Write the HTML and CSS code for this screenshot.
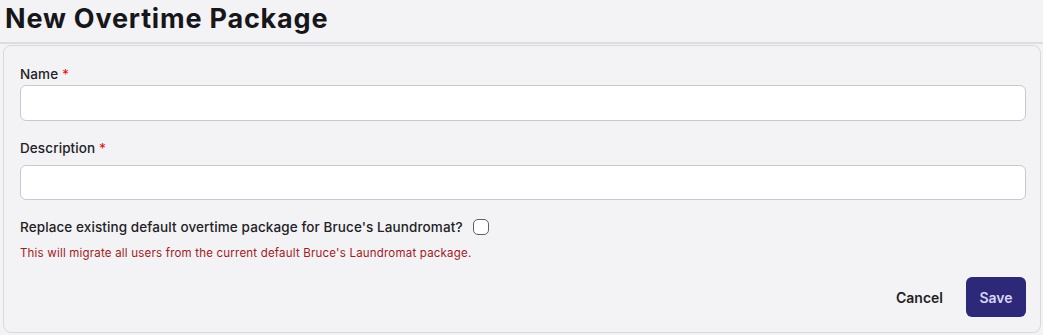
FILE: index.html
```html
<!DOCTYPE html>
<html lang="en">
<head>
    <meta charset="UTF-8">
    <meta name="viewport" content="width=device-width, initial-scale=1.0">
    <title>New Overtime Package</title>
    <link rel="stylesheet" href="styles.css">
</head>
<body>
    <div class="page_header">
        <h1 class="page_title">New Overtime Package</h1>
    </div>
    <form class="card">
        <div class="field">
            <label for="name" class="field_label">Name <span class="req">*</span></label>
            <input type="text" id="name" class="text_input">
        </div>
        <div class="field field_desc">
            <label for="description" class="field_label">Description <span class="req">*</span></label>
            <input type="text" id="description" class="text_input">
        </div>
        <div class="check_row">
            <label for="replace" class="field_label">Replace existing default overtime package for Bruce's Laundromat?</label>
            <input type="checkbox" id="replace" class="check">
        </div>
        <div class="warning">This will migrate all users from the current default Bruce's Laundromat package.</div>
        <div class="actions">
            <button type="button" class="btn btn_cancel">Cancel</button>
            <button type="button" class="btn btn_save">Save</button>
        </div>
    </form>
</body>
</html>
```

FILE: styles.css
```css
body
{
    margin: 0;
    background-color: #f3f2f5;
    font-family: Inter, "Noto Sans", sans-serif;
    color: #1f1f23;
}
.page_header
{
    height: 42px;
    padding: 0 5px;
    border-bottom: 2px solid #dddce0;
}
.page_title
{
    margin: 0;
    font-size: 27px;
    line-height: 37px;
    letter-spacing: 0.8px;
    font-weight: 700;
    color: #17171b;
}
.card
{
    margin: 1px 2px 0 3px;
    padding: 20px 14px 15px 16px;
    border: 1px solid #d9d8dc;
    border-radius: 8px;
    display: flex;
    flex-direction: column;
}
.field
{
    display: flex;
    flex-direction: column;
    gap: 3px;
    margin-bottom: 19px;
}
.field_desc
{
    gap: 9px;
}
.field_desc .text_input
{
    height: 35px;
}
.field_label
{
    font-size: 13.5px;
    line-height: 16px;
    letter-spacing: 0.1px;
    font-weight: 500;
    color: #222226;
}
.req
{
    color: #e01b1b;
}
.text_input
{
    height: 36px;
    margin: 0;
    border: 1px solid #c9c8cc;
    border-radius: 6px;
    background-color: #fff;
    box-sizing: border-box;
}
.check_row
{
    display: flex;
    align-items: center;
    gap: 10px;
}
.check
{
    appearance: none;
    width: 16px;
    height: 16px;
    margin: 0;
    border: 1px solid #5b5f6e;
    border-radius: 5px;
    background-color: #fff;
}
.warning
{
    margin-top: 11px;
    font-size: 11.5px;
    line-height: 14px;
    letter-spacing: 0.2px;
    color: #a11a24;
}
.actions
{
    margin-top: 17px;
    display: flex;
    justify-content: flex-end;
    gap: 9px;
}
.btn
{
    height: 40px;
    padding: 0 14px;
    border: none;
    border-radius: 6px;
    font-family: inherit;
    font-size: 14px;
    font-weight: 600;
}
.btn_cancel
{
    background-color: transparent;
    color: #1f1f23;
}
.btn_save
{
    width: 60px;
    padding: 0;
    background-color: #2d2878;
    color: #d8d6f5;
}
```
